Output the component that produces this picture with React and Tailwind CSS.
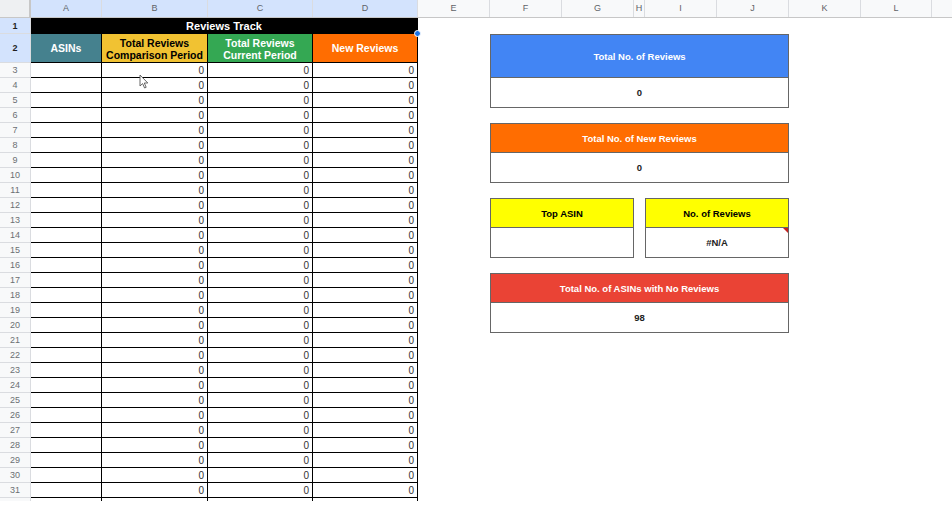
import React from 'react';

const COLS = [
  { label: '', w: 'w-[31px]' },
  { label: 'A', w: 'w-[71px]', sel: true },
  { label: 'B', w: 'w-[106px]', sel: true },
  { label: 'C', w: 'w-[105px]', sel: true },
  { label: 'D', w: 'w-[105px]', sel: true },
  { label: 'E', w: 'w-[72px]' },
  { label: 'F', w: 'w-[72px]' },
  { label: 'G', w: 'w-[72px]' },
  { label: 'H', w: 'w-[11px]' },
  { label: 'I', w: 'w-[72px]' },
  { label: 'J', w: 'w-[72px]' },
  { label: 'K', w: 'w-[72px]' },
  { label: 'L', w: 'w-[71px]' },
];

const dataRows = Array.from({ length: 29 }, (_, i) => i + 3);

const ColumnHeader = () => (
  <div className="flex h-[18px] bg-[#f8f9fa] border-b border-[#c7c7c7]">
    {COLS.map((c, i) => (
      <div
        key={i}
        className={
          'shrink-0 flex items-center justify-center pt-[1px] text-[9px] text-[#5f6368] border-r border-[#dadce0] ' +
          c.w +
          (i === 0 ? ' bg-[#eef0f2] border-r-2 border-r-[#c7c7c7]' : '') +
          (c.sel ? ' bg-[#d3e3fd] text-[#1f1f1f]' : '')
        }
      >
        {c.label}
      </div>
    ))}
    <div className="flex-1" />
  </div>
);

const RowNum = ({ n, active }) => (
  <div
    className={
      'flex items-center justify-center pt-[2px] text-[9px] border-b border-r border-[#dadce0] ' +
      (active ? 'bg-[#d3e3fd] text-[#1f1f1f] font-bold' : 'bg-[#f8f9fa] text-[#6b6f73]')
    }
  >
    {n}
  </div>
);

const ValueCell = () => (
  <div className="flex items-end justify-end pr-[3px] text-[10px] leading-[12px] text-[#333] border-b border-r border-black">
    0
  </div>
);

const ReviewsTable = () => (
  <div className="relative w-[418px] shrink-0 grid grid-cols-[31px_71px_106px_105px_105px] grid-rows-[16px_29px_repeat(29,15px)_3px]">
    <RowNum n={1} active />
    <div className="col-span-4 bg-black text-white font-bold text-[11px] flex items-center justify-center pt-[2px] border-b border-r border-black">
      Reviews Track
    </div>

    <RowNum n={2} active />
    <div className="bg-[#45818e] text-white font-bold text-[10.5px] flex items-center justify-center pt-[1px] border-b border-r border-black">
      ASINs
    </div>
    <div className="bg-[#f1c232] text-black font-bold text-[10.5px] leading-[12px] flex items-center justify-center pt-[1px] text-center border-b border-r border-black">
      Total Reviews
      <br />
      Comparison Period
    </div>
    <div className="bg-[#34a853] text-white font-bold text-[10.5px] leading-[12px] flex items-center justify-center pt-[1px] text-center border-b border-r border-black">
      Total Reviews
      <br />
      Current Period
    </div>
    <div className="bg-[#ff6d01] text-white font-bold text-[10.5px] flex items-center justify-center pt-[1px] border-b border-r border-black">
      New Reviews
    </div>

    {dataRows.map((n) => (
      <React.Fragment key={n}>
        <RowNum n={n} />
        <div className="border-b border-r border-black" />
        <ValueCell />
        <ValueCell />
        <ValueCell />
      </React.Fragment>
    ))}

    <div className="bg-[#f8f9fa] border-r border-[#dadce0]" />
    <div className="border-r border-black" />
    <div className="border-r border-black" />
    <div className="border-r border-black" />
    <div className="border-r border-black" />

    {/* selection handle */}
    <div className="absolute left-[414px] top-[12px] w-[7px] h-[7px] rounded-full bg-[#1a73e8] border border-white" />

    {/* mouse cursor */}
    <svg className="absolute left-[139px] top-[56px]" width="10" height="15" viewBox="0 0 10 15">
      <path d="M1 1 L1 12 L3.6 9.6 L5.6 14 L7.2 13.3 L5.3 9 L8.8 9 Z" fill="#fff" stroke="#555" strokeWidth="0.9" strokeLinejoin="round" />
    </svg>
  </div>
);

const CardHead = ({ className, children }) => (
  <div className={'flex items-center justify-center pt-[3px] font-bold text-[9.5px] border border-[#666] ' + className}>
    {children}
  </div>
);

const CardBody = ({ className, children }) => (
  <div className={'relative flex items-center justify-center pt-[2px] font-bold text-[9.5px] text-[#222] bg-white border-x border-b border-[#666] ' + className}>
    {children}
  </div>
);

const Dashboard = () => (
  <div className="flex-1 grid grid-cols-[72px_72px_72px_11px_72px_72px_72px_71px_1fr] grid-rows-[16px_29px_repeat(29,15px)_3px]">
    <CardHead className="col-[2/7] row-[2/4] bg-[#4285f4] text-white">Total No. of Reviews</CardHead>
    <CardBody className="col-[2/7] row-[4/6]">0</CardBody>

    <CardHead className="col-[2/7] row-[7/9] bg-[#ff6d01] text-white">Total No. of New Reviews</CardHead>
    <CardBody className="col-[2/7] row-[9/11]">0</CardBody>

    <CardHead className="col-[2/4] row-[12/14] bg-[#ffff00] text-black">Top ASIN</CardHead>
    <CardBody className="col-[2/4] row-[14/16]" />

    <CardHead className="col-[5/7] row-[12/14] bg-[#ffff00] text-black">No. of Reviews</CardHead>
    <CardBody className="col-[5/7] row-[14/16]">
      #N/A
      <span className="absolute right-0 top-0 w-0 h-0 border-t-[5px] border-l-[5px] border-t-[#c5221f] border-l-transparent" />
    </CardBody>

    <CardHead className="col-[2/7] row-[17/19] bg-[#ea4335] text-white">Total No. of ASINs with No Reviews</CardHead>
    <CardBody className="col-[2/7] row-[19/21]">98</CardBody>
  </div>
);

export default function App() {
  return (
    <div className="w-[952px] h-[513px] overflow-hidden bg-white font-['Liberation_Sans',Arial,sans-serif]">
      <ColumnHeader />
      <div className="flex">
        <ReviewsTable />
        <Dashboard />
      </div>
    </div>
  );
}
